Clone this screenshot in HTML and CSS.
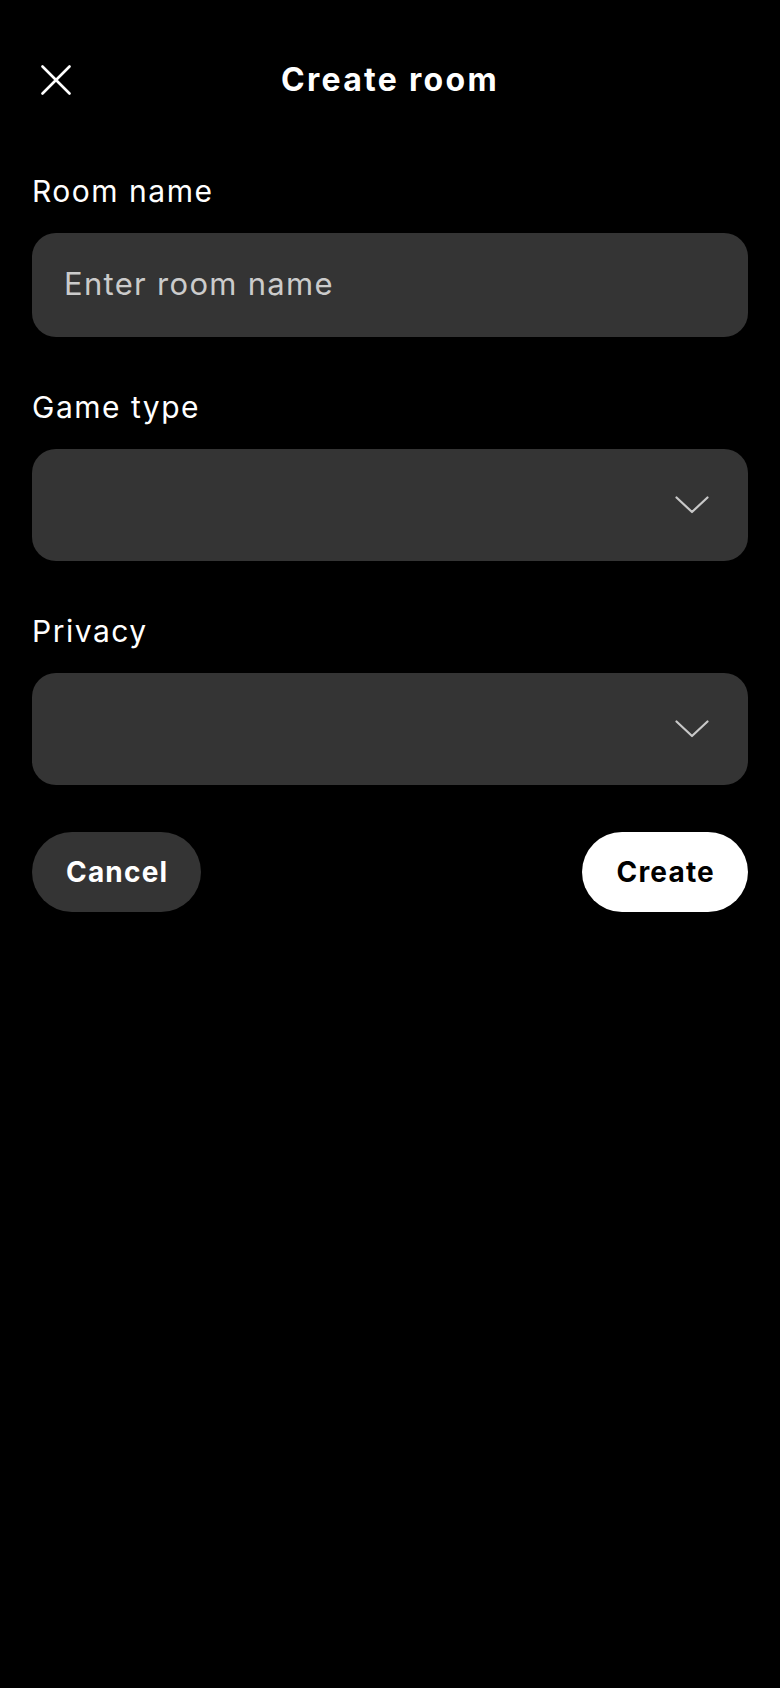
FILE: index.html
```html
<!DOCTYPE html>
<html lang="en">
<head>
<meta charset="utf-8">
<title>Create room</title>
<link rel="stylesheet" href="styles.css">
</head>
<body>
<div class="screen">
  <header class="topbar">
    <button class="close" aria-label="Close">
      <svg width="30" height="30" viewBox="0 0 30 30"><path d="M1.5 1.5 L28.5 28.5 M28.5 1.5 L1.5 28.5" stroke="#fff" stroke-width="2.6" stroke-linecap="round" fill="none"/></svg>
    </button>
    <h1 class="title">Create room</h1>
    <span></span>
  </header>

  <form class="form">
    <div class="field first">
      <label class="label">Room name</label>
      <div class="box input"><span class="placeholder">Enter room name</span></div>
    </div>
    <div class="field">
      <label class="label">Game type</label>
      <div class="box select">
        <svg class="chev" width="34" height="18" viewBox="0 0 34 18"><path d="M1.5 1.5 L17 16 L32.5 1.5" stroke="#c8c8c8" stroke-width="2.2" stroke-linecap="round" stroke-linejoin="round" fill="none"/></svg>
      </div>
    </div>
    <div class="field">
      <label class="label">Privacy</label>
      <div class="box select">
        <svg class="chev" width="34" height="18" viewBox="0 0 34 18"><path d="M1.5 1.5 L17 16 L32.5 1.5" stroke="#c8c8c8" stroke-width="2.2" stroke-linecap="round" stroke-linejoin="round" fill="none"/></svg>
      </div>
    </div>
    <div class="actions">
      <button type="button" class="btn cancel">Cancel</button>
      <button type="button" class="btn create">Create</button>
    </div>
  </form>
</div>
</body>
</html>
```

FILE: styles.css
```css
html, body {
  margin: 0;
  padding: 0;
  background: #000;
}
body {
  font-family: Inter, "Noto Sans", sans-serif;
  color: #fff;
  min-height: 1688px;
}
.screen {
  width: 780px;
}
.topbar {
  display: grid;
  grid-template-columns: 1fr auto 1fr;
  align-items: center;
  height: 40px;
  padding: 60px 0 0 0;
}
.close {
  justify-self: start;
  margin-left: 41px;
  width: 30px;
  height: 30px;
  padding: 0;
  border: 0;
  background: none;
  display: flex;
}
.title {
  margin: 0;
  font-size: 32px;
  line-height: 40px;
  font-weight: 700;
  letter-spacing: 2.3px;
}
.form {
  padding: 0 32px;
  margin-top: 73px;
}
.field {
  display: flex;
  flex-direction: column;
  margin-top: 52px;
}
.field.first {
  margin-top: 0;
}
.label {
  font-size: 30px;
  line-height: 36px;
  font-weight: 400;
  letter-spacing: 1.5px;
  margin-bottom: 24px;
}
.box {
  background: #343434;
  border-radius: 24px;
  display: flex;
  align-items: center;
}
.input {
  height: 104px;
  padding-left: 32px;
}
.placeholder {
  font-size: 31px;
  line-height: 36px;
  color: #cbcbcb;
  letter-spacing: 1.3px;
  margin-top: -2px;
}
.select {
  height: 112px;
  justify-content: flex-end;
  padding-right: 39px;
}
.chev {
  display: block;
}
.actions {
  display: flex;
  justify-content: space-between;
  margin-top: 47px;
}
.btn {
  height: 80px;
  border-radius: 40px;
  border: 0;
  padding: 0 33px 0 34px;
  font-family: Inter, "Noto Sans", sans-serif;
  font-size: 28px;
  font-weight: 700;
  letter-spacing: 1.2px;
}
.cancel {
  background: #343434;
  color: #fff;
}
.create {
  background: #fff;
  color: #000;
}
```
